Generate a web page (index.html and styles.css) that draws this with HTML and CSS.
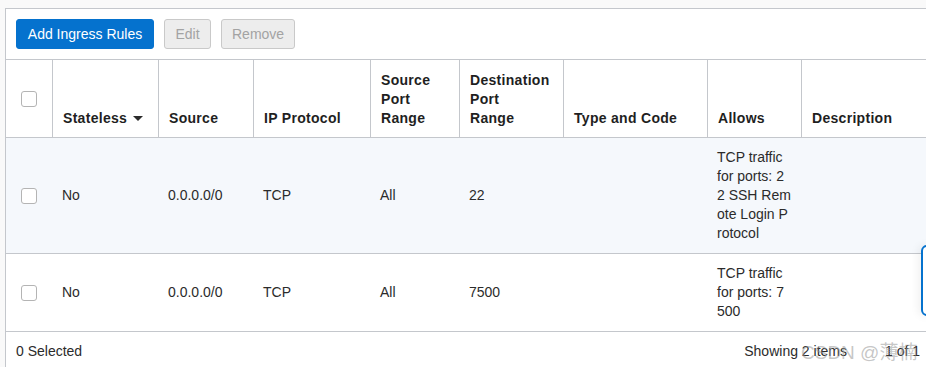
FILE: index.html
```html
<!DOCTYPE html>
<html lang="en">
<head>
<meta charset="utf-8">
<title>Ingress Rules</title>
<link rel="stylesheet" href="styles.css">
</head>
<body>
<div class="panel">
  <div class="toolbar">
    <button class="btn btn-primary">Add Ingress Rules</button>
    <button class="btn btn-disabled btn-edit">Edit</button>
    <button class="btn btn-disabled btn-remove">Remove</button>
  </div>
  <table class="grid">
    <colgroup>
      <col class="c1"><col class="c2"><col class="c3"><col class="c4"><col class="c5"><col class="c6"><col class="c7"><col class="c8"><col class="c9">
    </colgroup>
    <thead>
      <tr>
        <th class="chk-cell"><span class="checkbox"></span></th>
        <th>Stateless <span class="caret"></span></th>
        <th>Source</th>
        <th>IP Protocol</th>
        <th>Source Port Range</th>
        <th class="th-wrap">Destination Port Range</th>
        <th>Type and Code</th>
        <th>Allows</th>
        <th>Description</th>
      </tr>
    </thead>
    <tbody>
      <tr class="alt">
        <td class="chk-cell"><span class="checkbox"></span></td>
        <td>No</td>
        <td>0.0.0.0/0</td>
        <td>TCP</td>
        <td>All</td>
        <td>22</td>
        <td></td>
        <td class="allows">TCP traffic<br>for ports: 22 SSH Remote Login Protocol</td>
        <td></td>
      </tr>
      <tr>
        <td class="chk-cell"><span class="checkbox"></span></td>
        <td>No</td>
        <td>0.0.0.0/0</td>
        <td>TCP</td>
        <td>All</td>
        <td>7500</td>
        <td></td>
        <td class="allows">TCP traffic<br>for ports: 7500</td>
        <td></td>
      </tr>
    </tbody>
  </table>
  <div class="footer">
    <span>0 Selected</span>
    <div class="pager">
      <span>Showing 2 items</span>
      <span>1 of 1</span>
    </div>
  </div>
</div>
<div class="feedback-tab"></div>
<div class="watermark">CSDN @薄楠</div>
</body>
</html>
```

FILE: styles.css
```css
html, body {
  margin: 0;
  padding: 0;
}
body {
  background: #f9f9f9;
  font-family: "Liberation Sans", Arial, sans-serif;
  font-size: 14px;
  color: #2b2b2b;
  width: 926px;
  height: 367px;
  overflow: hidden;
  position: relative;
  padding: 8px 0 0 5px;
  box-sizing: border-box;
}
.panel {
  width: 1000px;
  background: #fff;
  border: 1px solid #c4c7cc;
  border-right: none;
}
.toolbar {
  display: flex;
  gap: 10px;
  padding: 10px 10px;
  height: 51px;
  box-sizing: border-box;
  border-bottom: 1px solid #c4c7cc;
}
.btn {
  font-family: "Liberation Sans", Arial, sans-serif;
  font-size: 14px;
  height: 30px;
  padding: 0 10px;
  border-radius: 3px;
  border: 1px solid transparent;
  box-sizing: border-box;
  line-height: 28px;
}
.btn-primary {
  background: #0572ce;
  border-color: #0572ce;
  color: #fff;
  width: 138px;
}
.btn-disabled {
  background: #ededed;
  border-color: #c9c9c9;
  color: #a3a3a3;
}
.btn-edit { width: 47px; }
.btn-remove { width: 74px; }

.grid {
  border-collapse: separate;
  border-spacing: 0;
  table-layout: fixed;
  width: 995px;
}
.c1 { width: 47px; }
.c2 { width: 106px; }
.c3 { width: 95px; }
.c4 { width: 117px; }
.c5 { width: 89px; }
.c6 { width: 104px; }
.c7 { width: 144px; }
.c8 { width: 94px; }
.c9 { width: 199px; }

th {
  text-align: left;
  vertical-align: bottom;
  font-weight: bold;
  font-size: 14px;
  letter-spacing: 0.3px;
  color: #1f1f1f;
  line-height: 19px;
  padding: 10px 10px 9px 10px;
  height: 78px;
  box-sizing: border-box;
  border-right: 1px solid #c4c7cc;
  border-bottom: 1px solid #c4c7cc;
}
th:last-child { border-right: none; }
th.th-wrap { padding-right: 20px; }
td {
  vertical-align: middle;
  line-height: 19px;
  padding: 10px 9px;
  border-bottom: 1px solid #c4c7cc;
  color: #2b2b2b;
}
tr.alt td { background: #f5f8fc; }
td.allows {
  word-break: break-all;
  padding-right: 11px;
}
.chk-cell {
  padding: 0 0 0 15px;
  vertical-align: middle;
}
.checkbox {
  display: block;
  width: 16px;
  height: 16px;
  box-sizing: border-box;
  border: 1px solid #b4b4b4;
  border-radius: 3px;
  background: #fff;
}
.caret {
  display: inline-block;
  width: 0;
  height: 0;
  border-left: 5px solid transparent;
  border-right: 5px solid transparent;
  border-top: 5px solid #2b2b2b;
  vertical-align: middle;
  margin-left: 2px;
  margin-bottom: 2px;
}
.footer {
  display: flex;
  align-items: center;
  padding: 10px 10px;
  line-height: 19px;
  width: 921px;
  box-sizing: border-box;
}
.pager {
  margin-left: auto;
  display: flex;
  gap: 38px;
  margin-right: -3px;
}
.feedback-tab {
  position: absolute;
  left: 921px;
  top: 245px;
  width: 30px;
  height: 71px;
  box-sizing: border-box;
  border: 2px solid #0572ce;
  border-radius: 6px;
  background: #fff;
  box-shadow: -3px 0 8px rgba(0,0,0,0.06);
}
.watermark {
  position: absolute;
  left: 801px;
  top: 337px;
  font-family: "Liberation Sans", "Noto Sans CJK SC", sans-serif;
  font-size: 19px;
  color: rgba(150, 150, 150, 0.55);
  white-space: nowrap;
}
```
